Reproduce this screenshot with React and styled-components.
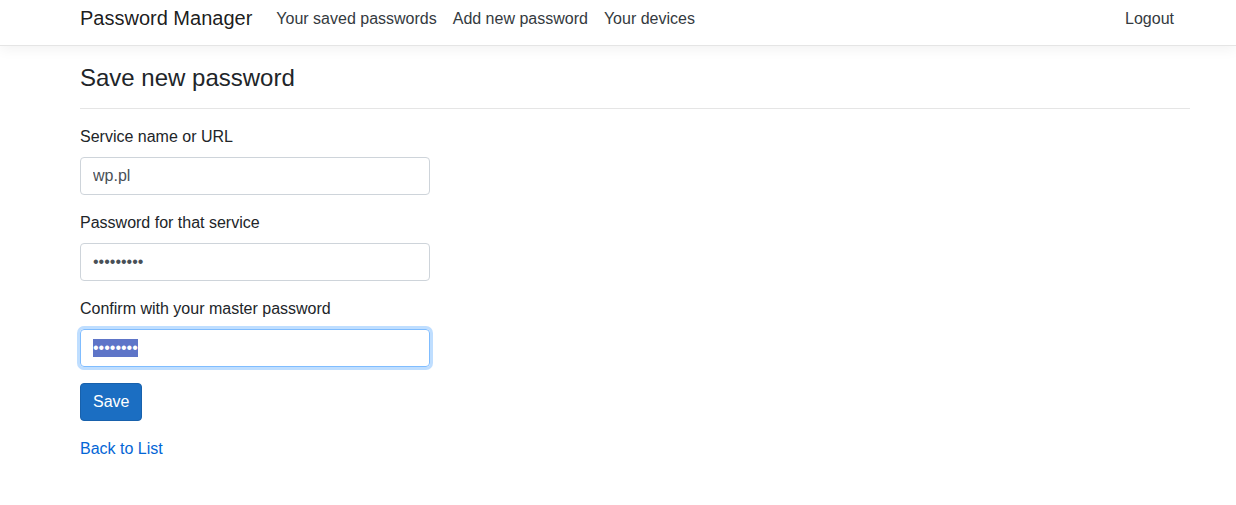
import React from 'react';
import styled, { createGlobalStyle } from 'styled-components';

const GlobalStyle = createGlobalStyle`
  html, body {
    margin: 0;
    padding: 0;
    background: #fff;
  }
  body {
    font-family: "Liberation Sans", Arial, sans-serif;
    font-size: 16px;
    line-height: 1.5;
    color: #212529;
  }
  * {
    box-sizing: border-box;
  }
`;

const Navbar = styled.nav`
  height: 46px;
  display: flex;
  align-items: flex-start;
  padding: 0 54px 0 80px;
  background: #fff;
  border-bottom: 1px solid #e5e5e5;
  box-shadow: 0 4px 12px rgba(0, 0, 0, 0.05);
`;

const Brand = styled.a`
  font-size: 20px;
  line-height: 36px;
  color: rgba(0, 0, 0, 0.9);
  text-decoration: none;
  margin-right: 16px;
`;

const NavList = styled.ul`
  display: flex;
  list-style: none;
  margin: 0;
  padding: 0;
  flex: 1;
`;

const NavLink = styled.a`
  display: block;
  padding: 0 8px;
  line-height: 37px;
  color: #343a40;
  text-decoration: none;
`;

const Main = styled.main`
  padding: 17px 46px 60px 80px;
`;

const Title = styled.h3`
  margin: 0;
  font-size: 24px;
  font-weight: 400;
  line-height: 29px;
`;

const Rule = styled.hr`
  margin: 16px 0;
  border: 0;
  border-top: 1px solid rgba(0, 0, 0, 0.1);
`;

const FormGroup = styled.div`
  margin-bottom: 16px;
`;

const Label = styled.label`
  display: block;
  margin-bottom: 8px;
  line-height: 24px;
`;

const Input = styled.input`
  display: block;
  width: 350px;
  height: 38px;
  padding: 6px 12px;
  font-family: inherit;
  font-size: 16px;
  line-height: 24px;
  color: #495057;
  background: #fff;
  border: 1px solid #ced4da;
  border-radius: 4px;
  outline: none;
`;

/* master password field, shown focused with its text selected */
const FocusedField = styled.div`
  display: flex;
  align-items: center;
  width: 350px;
  height: 38px;
  padding: 6px 12px;
  border: 1px solid #80bdff;
  border-radius: 4px;
  box-shadow: 0 0 0 3px rgba(0, 123, 255, 0.25);
`;

const Selected = styled.span`
  background: #5e75c8;
  color: #fff;
  font-size: 16px;
  line-height: 18px;
`;

const Button = styled.button`
  display: inline-block;
  height: 38px;
  padding: 6px 12px;
  font-family: inherit;
  font-size: 16px;
  line-height: 24px;
  color: #fff;
  background: #1b6ec2;
  border: 1px solid #1861ac;
  border-radius: 4px;
  cursor: pointer;
`;

const BackLink = styled.a`
  color: #0366d6;
  text-decoration: none;
  line-height: 24px;
`;

const navItems = ['Your saved passwords', 'Add new password', 'Your devices'];

const App = () => {
  return (
    <>
      <GlobalStyle />
      <Navbar>
        <Brand href="#">Password Manager</Brand>
        <NavList>
          {navItems.map((item) => (
            <li key={item}>
              <NavLink href="#">{item}</NavLink>
            </li>
          ))}
        </NavList>
        <NavLink href="#">Logout</NavLink>
      </Navbar>
      <Main>
        <Title>Save new password</Title>
        <Rule />
        <form onSubmit={(e) => e.preventDefault()}>
          <FormGroup>
            <Label htmlFor="service">Service name or URL</Label>
            <Input id="service" type="text" defaultValue="wp.pl" />
          </FormGroup>
          <FormGroup>
            <Label htmlFor="password">Password for that service</Label>
            <Input id="password" type="password" defaultValue="secret123" />
          </FormGroup>
          <FormGroup>
            <Label>Confirm with your master password</Label>
            <FocusedField>
              <Selected>••••••••</Selected>
            </FocusedField>
          </FormGroup>
          <FormGroup>
            <Button type="submit">Save</Button>
          </FormGroup>
        </form>
        <div>
          <BackLink href="#">Back to List</BackLink>
        </div>
      </Main>
    </>
  );
};

export default App;
